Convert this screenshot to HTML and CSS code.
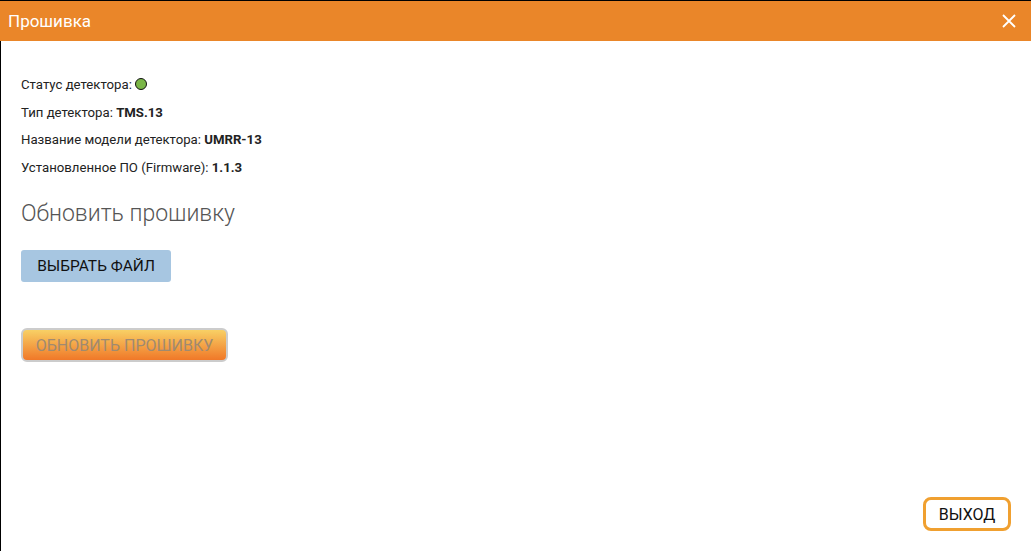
FILE: index.html
```html
<!DOCTYPE html>
<html lang="ru">
<head>
    <meta charset="UTF-8">
    <title>Прошивка</title>
    <link rel="stylesheet" href="styles.css">
</head>
<body>
    <div class="dialog">
        <div class="dialog-header">
            <span class="dialog-title">Прошивка</span>
            <button class="close-btn" aria-label="Закрыть">
                <svg width="16" height="16" viewBox="0 0 16 16">
                    <path d="M2 2 L14 14 M14 2 L2 14" stroke="#fff" stroke-width="1.8" fill="none"/>
                </svg>
            </button>
        </div>
        <div class="dialog-body">
            <div class="info">
                <p>Статус детектора: <span class="status-dot"></span></p>
                <p>Тип детектора: <b>TMS.13</b></p>
                <p>Название модели детектора: <b>UMRR-13</b></p>
                <p>Установленное ПО (Firmware): <b>1.1.3</b></p>
            </div>
            <h2>Обновить прошивку</h2>
            <button class="btn-file">ВЫБРАТЬ ФАЙЛ</button>
            <button class="btn-update" disabled>ОБНОВИТЬ ПРОШИВКУ</button>
            <div class="footer">
                <button class="btn-exit">ВЫХОД</button>
            </div>
        </div>
    </div>
</body>
</html>
```

FILE: styles.css
```css
html, body {
    margin: 0;
    padding: 0;
    height: 100%;
}

body {
    font-family: Roboto, "Liberation Sans", sans-serif;
    background: #fff;
    border-top: 1px solid #000;
    box-sizing: border-box;
}

.dialog {
    display: flex;
    flex-direction: column;
    height: 550px;
}

.dialog-header {
    height: 40px;
    background: #ea8629;
    display: flex;
    align-items: center;
    justify-content: space-between;
    padding: 0 14px 0 8px;
}

.dialog-title {
    color: #fff;
    font-size: 17px;
    margin-top: -1px;
}

.close-btn {
    background: none;
    border: none;
    padding: 0;
    width: 16px;
    height: 16px;
    cursor: pointer;
    display: flex;
}

.dialog-body {
    flex: 1;
    border-left: 1px solid #000;
    padding: 0 20px 20px 20px;
    display: flex;
    flex-direction: column;
    align-items: flex-start;
}

.info {
    margin-top: 30px;
}

.info p {
    margin: 0;
    font-size: 13.2px;
    line-height: 27.5px;
    color: #222;
}

.info b {
    font-weight: 700;
}

.status-dot {
    display: inline-block;
    width: 10px;
    height: 10px;
    border-radius: 50%;
    background: #7ab648;
    border: 1px solid #111;
    vertical-align: -1px;
}

h2 {
    font-weight: 300;
    font-size: 23px;
    color: #555;
    margin: 18px 0 0 0;
    line-height: 30px;
}

.btn-file {
    margin-top: 21px;
    width: 150px;
    height: 32px;
    background: #a7c6e1;
    border: none;
    border-radius: 3px;
    font-family: inherit;
    font-size: 15.5px;
    color: #111;
    cursor: pointer;
}

.btn-update {
    margin-top: 46px;
    width: 207px;
    height: 34px;
    padding: 0;
    border: 2px solid #cccccc;
    border-radius: 6px;
    background: linear-gradient(#f8d065, #f07828);
    font-family: inherit;
    font-size: 16px;
    color: #a08a70;
}

.footer {
    margin-top: auto;
    align-self: stretch;
    display: flex;
    justify-content: flex-end;
}

.btn-exit {
    width: 88px;
    height: 34px;
    padding: 0;
    background: #fff;
    border: 3px solid #f0a030;
    border-radius: 8px;
    font-family: inherit;
    font-size: 16px;
    color: #111;
    cursor: pointer;
}
```
